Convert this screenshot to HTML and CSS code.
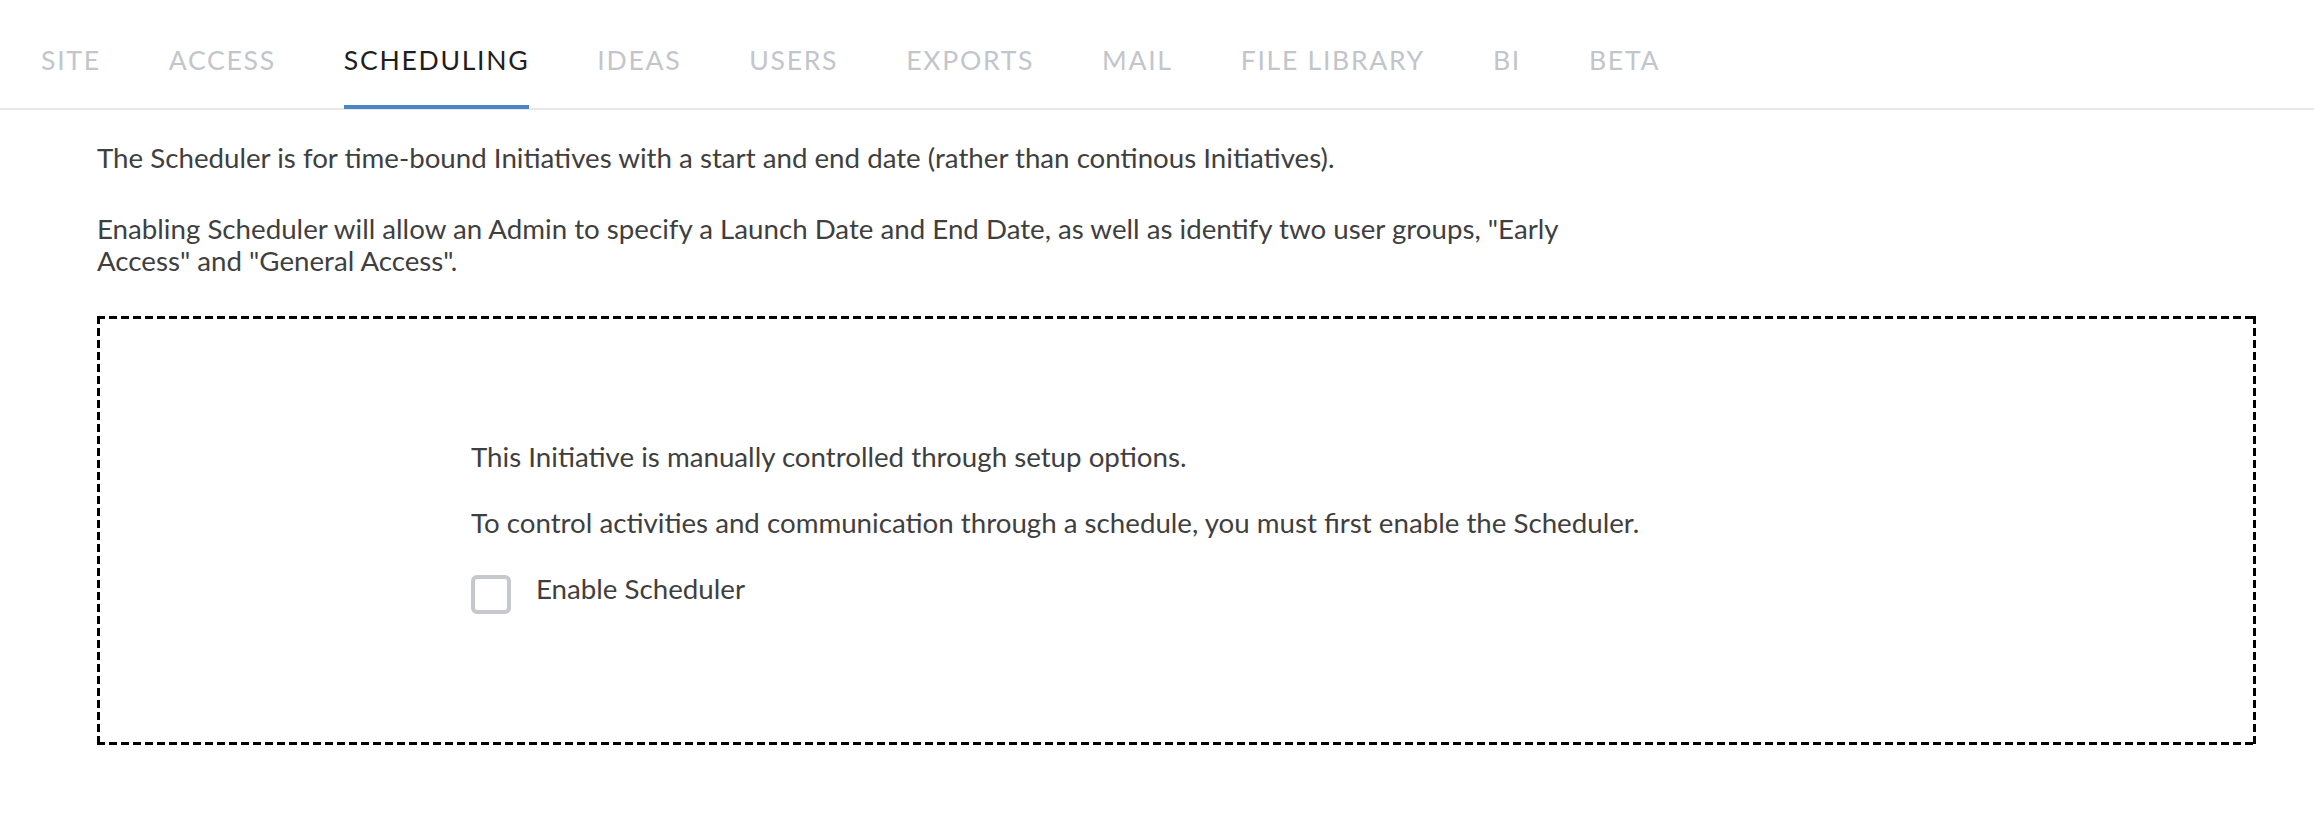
FILE: index.html
```html
<!DOCTYPE html>
<html lang="en">
<head>
    <meta charset="UTF-8">
    <meta name="viewport" content="width=device-width, initial-scale=1.0">
    <title>Scheduling</title>
    <link rel="stylesheet" href="styles.css">
</head>
<body>
    <nav class="tabs">
        <a class="tab" href="#">SITE</a>
        <a class="tab" href="#">ACCESS</a>
        <a class="tab active" href="#">SCHEDULING</a>
        <a class="tab" href="#">IDEAS</a>
        <a class="tab" href="#">USERS</a>
        <a class="tab" href="#">EXPORTS</a>
        <a class="tab" href="#">MAIL</a>
        <a class="tab" href="#">FILE LIBRARY</a>
        <a class="tab" href="#">BI</a>
        <a class="tab" href="#">BETA</a>
    </nav>
    <main class="content">
        <p class="intro">The Scheduler is for time-bound Initiatives with a start and end date (rather than continous Initiatives).</p>
        <p class="intro">Enabling Scheduler will allow an Admin to specify a Launch Date and End Date, as well as identify two user groups, "Early Access" and "General Access".</p>
        <div class="setup-box">
            <div class="setup-inner">
                <p>This Initiative is manually controlled through setup options.</p>
                <p>To control activities and communication through a schedule, you must first enable the Scheduler.</p>
                <label class="check-row">
                    <input type="checkbox" id="enable_scheduler">
                    <span class="check-box"></span>
                    <span>Enable Scheduler</span>
                </label>
            </div>
        </div>
    </main>
</body>
</html>
```

FILE: styles.css
```css
body {
    font-family: Lato, "Open Sans", sans-serif;
    font-size: 27.7px;
    line-height: 32px;
    color: #3f3f3f;
    background: #fff;
    margin: 0;
}
.tabs {
    display: flex;
    gap: 68px;
    padding-left: 41px;
    border-bottom: 2px solid #e8e8e8;
}
.tab {
    display: block;
    padding: 45px 0 29px;
    font-size: 26.6px;
    line-height: 31px;
    margin-bottom: -1px;
    border-bottom: 4px solid transparent;
    color: #c2c6cb;
    letter-spacing: 1.7px;
    text-decoration: none;
}
.tab.active {
    color: #1e1e1e;
    border-bottom-color: #4a85c5;
}
.content {
    padding: 32px 58px 40px 97px;
}
.intro {
    max-width: 1500px;
    margin: 0 0 39px;
}
/* dashed frame drawn with gradients to get 8px dashes / 4px gaps */
.setup-box {
    padding: 125px 3px 131px;
    background:
        repeating-linear-gradient(90deg, #000 0 8px, transparent 8px 12px) left top / 100% 3px no-repeat,
        repeating-linear-gradient(90deg, #000 0 8px, transparent 8px 12px) left bottom / 100% 3px no-repeat,
        repeating-linear-gradient(180deg, #000 0 8px, transparent 8px 12px) left top / 3px 100% no-repeat,
        repeating-linear-gradient(180deg, #000 0 8px, transparent 8px 12px) right top / 3px 100% no-repeat;
}
.setup-inner {
    max-width: 1411px;
    margin: 0 auto;
}
.setup-inner p {
    margin: 0 0 34px;
}
.setup-inner p + .check-row {
    margin-top: 2px;
}
.check-row {
    display: flex;
    align-items: flex-start;
    gap: 25px;
    cursor: pointer;
}
.check-row input {
    display: none;
}
.check-box {
    width: 32px;
    height: 31px;
    margin-top: 2px;
    border: 4px solid #c5c9cd;
    border-radius: 6px;
}
```
